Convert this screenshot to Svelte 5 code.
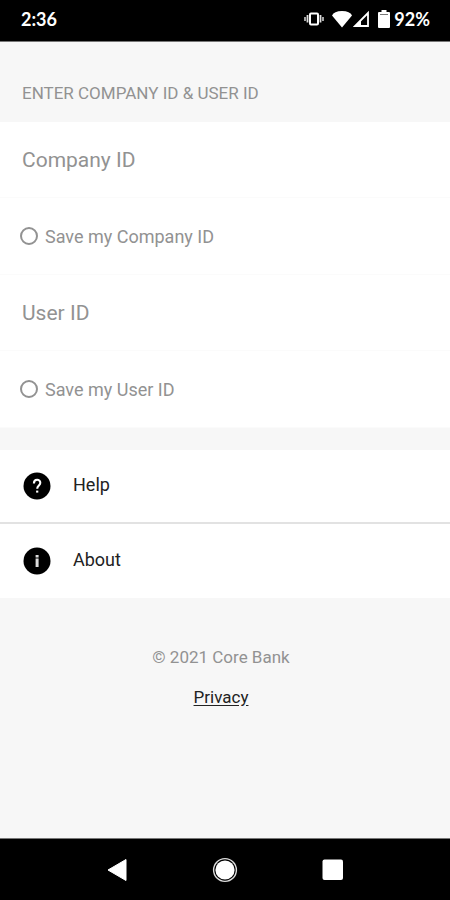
<script lang="ts">
	let companyId = '';
	let userId = '';
	let saveCompany = false;
	let saveUser = false;
</script>

<div class="screen">
	<header class="status-bar">
		<span class="time">2:36</span>
		<div class="status-icons">
			<svg class="vibrate" width="20" height="16" viewBox="0 0 20 16" aria-hidden="true">
				<rect x="6" y="2.5" width="8" height="11" rx="1" fill="none" stroke="#fff" stroke-width="2" />
				<path d="M3.5 4v7.5M16.5 4v7.5" stroke="#ddd" stroke-width="1.8" />
				<path d="M1 6v4M19 6v4" stroke="#ccc" stroke-width="1.6" />
			</svg>
			<svg class="wifi" width="20" height="18" viewBox="0 0 20 18" aria-hidden="true">
				<path d="M0 5.5Q2 1 10 1t10 4.5L10 17.5Z" fill="#fff" />
			</svg>
			<svg class="signal" width="17" height="18" viewBox="0 0 17 18" aria-hidden="true">
				<path d="M15 3V16H2Z" fill="none" stroke="#fff" stroke-width="1.8" />
				<path d="M1 16.8L8 10v6.8Z" fill="#fff" />
			</svg>
			<svg class="battery" width="12" height="18" viewBox="0 0 12 18" aria-hidden="true">
				<path d="M3.5 0h5v2H11q1 0 1 1v14q0 1-1 1H1q-1 0-1-1V3q0-1 1-1h2.5Z" fill="#fff" />
				<path d="M2 4.5h8" stroke="#777" />
			</svg>
			<span>92%</span>
		</div>
	</header>

	<main>
		<form>
			<h1>ENTER COMPANY ID &amp; USER ID</h1>
			<div class="group">
				<div class="field">
					<input type="text" placeholder="Company ID" aria-label="Company ID" bind:value={companyId} />
				</div>
				<label class="toggle">
					<input type="checkbox" bind:checked={saveCompany} />
					<span>Save my Company ID</span>
				</label>
				<div class="field">
					<input type="text" placeholder="User ID" aria-label="User ID" bind:value={userId} />
				</div>
				<label class="toggle">
					<input type="checkbox" bind:checked={saveUser} />
					<span>Save my User ID</span>
				</label>
			</div>
		</form>

		<nav class="links">
			<a href="#help">
				<svg width="28" height="28" viewBox="0 0 28 28" aria-hidden="true">
					<circle cx="14" cy="14" r="13.5" fill="#000" />
					<path
						d="M10.9 11.4c0-4.8 6.4-4.6 6.4-.6 0 2.6-3.1 2.9-3.1 6"
						fill="none"
						stroke="#fff"
						stroke-width="2.1"
					/>
					<path d="M13.1 18.6h2.2v2h-2.2z" fill="#fff" />
				</svg>
				<span>Help</span>
			</a>
			<a href="#about">
				<svg width="28" height="28" viewBox="0 0 28 28" aria-hidden="true">
					<circle cx="14" cy="14" r="13.5" fill="#000" />
					<path d="M12.6 8h3v2.4h-3zM12.6 11.6h3V20h-3z" fill="#ddd" />
				</svg>
				<span>About</span>
			</a>
		</nav>

		<footer>
			<p>© 2021 Core Bank</p>
			<a href="#privacy">Privacy</a>
		</footer>
	</main>

	<div class="nav-bar">
		<button type="button" aria-label="Back">
			<svg width="26" height="26" viewBox="0 0 26 26">
				<path d="M4 13L22 2.5v21Z" fill="#fff" stroke="#fff" stroke-linejoin="round" />
			</svg>
		</button>
		<button type="button" aria-label="Home">
			<svg width="26" height="26" viewBox="0 0 26 26">
				<circle cx="13" cy="13" r="11.4" fill="none" stroke="#ddd" stroke-width="1.4" />
				<circle cx="13" cy="13" r="9.6" fill="#fff" />
			</svg>
		</button>
		<button type="button" aria-label="Recent apps">
			<svg width="26" height="26" viewBox="0 0 26 26">
				<rect x="2.5" y="2.5" width="20.5" height="20.5" rx="2" fill="#fff" />
			</svg>
		</button>
	</div>
</div>

<style>
	:global(body) {
		margin: 0;
		background: #f7f7f7;
	}

	.screen {
		display: flex;
		flex-direction: column;
		min-height: 100vh;
		font-family: Roboto, sans-serif;
		color: #222;
	}

	svg {
		display: block;
		flex: none;
	}

	.status-bar {
		display: flex;
		align-items: center;
		justify-content: space-between;
		box-sizing: border-box;
		height: 42px;
		padding: 0 20px 4px 21px;
		border-bottom: 1px solid #777;
		background: #000;
		color: #fff;
		font-family: Lato, sans-serif;
		font-size: 18px;
		font-weight: 700;
	}

	.status-icons {
		display: flex;
		align-items: center;
	}

	.vibrate {
		margin-right: 8px;
	}

	.wifi {
		margin-right: 1px;
	}

	.signal {
		margin-right: 8px;
	}

	.battery {
		margin-right: 4px;
	}

	main {
		flex: 1;
	}

	h1 {
		margin: 0;
		padding: 39px 22px 17px;
		color: #929292;
		font-size: 17px;
		font-weight: 400;
		line-height: 24px;
	}

	.group {
		background: #fff;
	}

	.field,
	.toggle {
		display: flex;
		align-items: center;
		box-sizing: border-box;
		border-bottom: 1px solid #fbfbfb;
	}

	.field {
		height: 76px;
	}

	.field input {
		width: 100%;
		height: 100%;
		padding: 0 22px;
		border: 0;
		background: none;
		color: #222;
		font: inherit;
		font-size: 21px;
	}

	.field input::placeholder {
		color: #929292;
		opacity: 1;
	}

	.toggle {
		gap: 7px;
		height: 77px;
		padding: 0 20px;
		color: #929292;
		font-size: 18px;
	}

	.toggle input {
		appearance: none;
		box-sizing: border-box;
		width: 18px;
		height: 18px;
		margin: 0;
		border: 2px solid #929292;
		border-radius: 50%;
	}

	.toggle input:checked {
		background: #929292;
	}

	.links {
		margin-top: 22px;
		background: #fff;
	}

	.links a {
		display: flex;
		align-items: center;
		gap: 22px;
		box-sizing: border-box;
		height: 74px;
		padding: 0 23px;
		color: #222;
		font-size: 18px;
		text-decoration: none;
	}

	.links a:first-child {
		border-bottom: 2px solid #e2e2e2;
	}

	.links span {
		padding-bottom: 4px;
	}

	footer {
		padding: 47px 30px 47px 22px;
		text-align: center;
		font-size: 17px;
		line-height: 24px;
	}

	footer p {
		margin: 0 0 16px;
		color: #929292;
	}

	footer a {
		color: #222;
		text-underline-offset: 2px;
	}

	.nav-bar {
		display: flex;
		align-items: center;
		justify-content: center;
		gap: 82px;
		box-sizing: border-box;
		height: 62px;
		border-top: 1px solid #777;
		background: #000;
	}

	.nav-bar button {
		padding: 0;
		border: 0;
		background: none;
	}
</style>
